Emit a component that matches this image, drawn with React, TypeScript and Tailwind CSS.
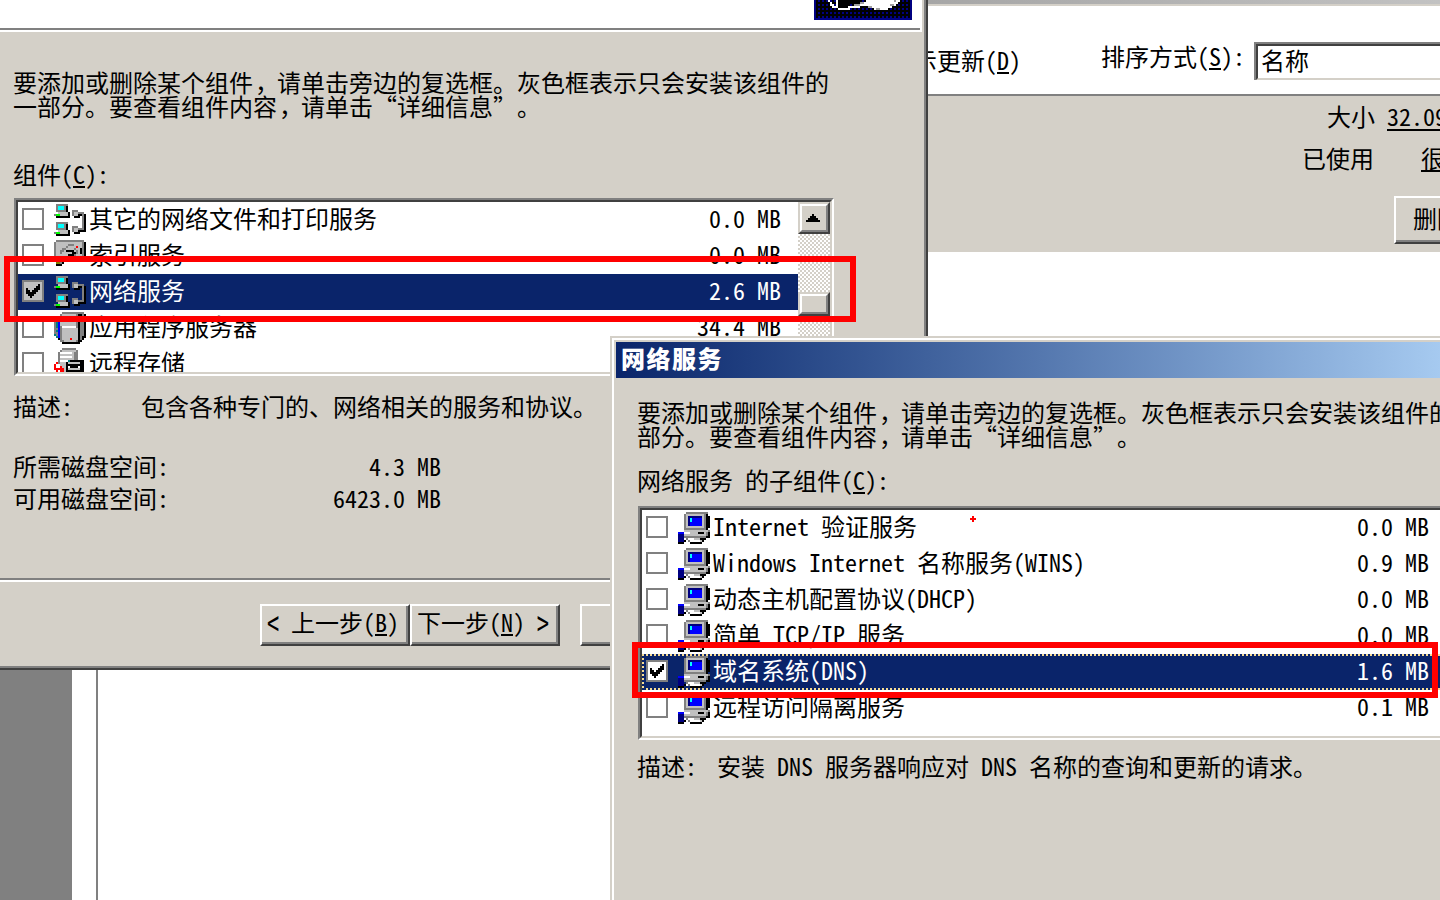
import React from "react";

const PALETTE: Record<string, string> = {
  k: "#000000",
  g: "#808080",
  l: "#c0c0c0",
  w: "#ffffff",
  n: "#000080",
  b: "#0000ff",
  c: "#00ffff",
  G: "#00ff00",
  t: "#008080",
  o: "#808000",
  r: "#ff0000",
};

const COMPUTER = [
  "....ggggggggggg.",
  "...glllllllllgk.",
  "...glnnnnnnnlgkk",
  "...glncbbbbblgkk",
  "...glncbbbbblgkk",
  "...glnbbbbbblgkk",
  "...glnbbbbbblgkk",
  "...glllllllllgkk",
  "...gggggggggggk.",
  "...llllllllllllg",
  "bbbwwwllllkkklgk",
  "nnnlllllllllllgk",
  "nnngggggggggggkk",
  "nnn.gwwwlllkkk..",
  "nnnkwgwwwwwlk...",
  "kkk...kkkkkk....",
];

const NETWORK = [
  ".gggggg.........",
  ".gcccgk.........",
  ".gcccgk.........",
  ".gggggk..ggg....",
  "..lllllk.gllggg.",
  "gGGllllk.gllkkgk",
  ".kkkkkkk..kkk.gk",
  "..............gk",
  "..............gk",
  ".gggggg.......gk",
  ".gcccgk.......gk",
  ".gcccgk..ggg..gk",
  ".gggggk..gllgggk",
  "..lllllk.gllkkkk",
  "gGGllllk..kkk...",
  ".kkkkkkk........",
];

const DRIVE = [
  ".gggggggggggggg.",
  "glllllllllllllgk",
  "gllllllgggllllgk",
  "glllllgllllrllgk",
  "glllggllllgllkgk",
  "gllgglkkkklglkgk",
  "gllglllllkkglkgk",
  "gllllllkkkglllgk",
  "gllloogggglllggk",
  "ggloogggggggggkk",
  "..oogkkkkkkkkkk.",
  ".oogk...........",
  ".kkk............",
];

const SERVER = [
  "....ggggggggggg.",
  "...glllllllgkkgk",
  "..ggggggggggkkgk",
  ".glllllllllgkggk",
  ".twwwwwwwwwgkggk",
  "gtbllllllllgkggk",
  "gtbllllllllgkggk",
  "gtbgwwwwwwwgkggk",
  "ggbgllllllllkggk",
  "gtbgllllllllkggk",
  "ggbgllllllllkggk",
  "tgbgllllllllkggk",
  ".tbgllllllllkgkk",
  "..kgllllrlllkgk.",
  "...ggllllllgkk..",
  "....kkkkkkkkk...",
];

const STORAGE = [
  "....ggggggg.....",
  "...glllllllg....",
  "..gwwwwwwlgg....",
  "..glllllllgg....",
  "..gwwwwwwlgg....",
  "..glllllllgg....",
  "..gwwwwtkkkkkkk.",
  ".rglllkllllllkk.",
  "r..lllkkkkkkkkk.",
  "r..rllkwkkkkwkk.",
  "rrrrrlkllllllkk.",
  ".r.rrlkkkkkkkkk.",
  "..r.kkkkkkkkkkk.",
];

function PixelIcon({ rows }: { rows: string[] }) {
  return (
    <svg width="32" height="32" viewBox="0 0 16 16" shapeRendering="crispEdges" className="block shrink-0">
      {rows.flatMap((row, y) =>
        [...row].map((ch, x) =>
          PALETTE[ch] ? <rect key={`${x}-${y}`} x={x} y={y} width="1" height="1" fill={PALETTE[ch]} /> : null,
        ),
      )}
    </svg>
  );
}

function Key({ children }: { children: string }) {
  return <span className="underline decoration-2 underline-offset-2 [text-decoration-skip-ink:none]">{children}</span>;
}

function Comma() {
  return <span className="inline-block w-6 pl-[2px] align-top [font-feature-settings:normal]">，</span>;
}

function Checkbox({ checked, dim }: { checked?: boolean; dim?: boolean }) {
  return (
    <span className={`flex size-[22px] shrink-0 border-2 border-[#808080] p-[2px] ${dim ? "bg-[#c0c0c0]" : "bg-white"}`}>
      {checked && (
        <svg width="14" height="18" viewBox="0 0 7 9" shapeRendering="crispEdges" className="block">
          {[2, 3, 4, 3, 2, 1, 0].map((y, x) => (
            <rect key={x} x={x} y={y} width="1" height="3" fill="#000" />
          ))}
        </svg>
      )}
    </span>
  );
}

type Item = { name: string; size: string; icon: string[]; checked?: boolean; dim?: boolean; focus?: boolean };

function ListRow({ item, padRight }: { item: Item; padRight: string }) {
  return (
    <div
      className={`relative flex h-9 shrink-0 pl-1 ${padRight} ${item.checked ? "bg-[#0a246a] text-white" : ""}`}
    >
      <div className="pt-[6px]">
        <Checkbox checked={item.checked} dim={item.dim} />
      </div>
      <div className="ml-[10px] pt-[2px]">
        <PixelIcon rows={item.icon} />
      </div>
      <span className="ml-[3px] pt-1">{item.name}</span>
      <span className="ml-auto pt-1">{item.size}</span>
      {item.focus && (
        <>
          <span className="absolute inset-x-0 top-0 h-[2px] bg-[repeating-linear-gradient(90deg,#f5db95_0_2px,#0a246a_2px_4px)]" />
          <span className="absolute inset-x-0 bottom-0 h-[2px] bg-[repeating-linear-gradient(90deg,#f5db95_0_2px,#0a246a_2px_4px)]" />
          <span className="absolute inset-y-0 left-0 w-[2px] bg-[repeating-linear-gradient(180deg,#f5db95_0_2px,#0a246a_2px_4px)]" />
        </>
      )}
    </div>
  );
}

const COMPONENTS: Item[] = [
  { name: "其它的网络文件和打印服务", size: "0.0 MB", icon: NETWORK },
  { name: "索引服务", size: "0.0 MB", icon: DRIVE },
  { name: "网络服务", size: "2.6 MB", icon: NETWORK, checked: true, dim: true },
  { name: "应用程序服务器", size: "34.4 MB", icon: SERVER },
  { name: "远程存储", size: "", icon: STORAGE },
];

const SUBCOMPONENTS: Item[] = [
  { name: "Internet 验证服务", size: "0.0 MB", icon: COMPUTER },
  { name: "Windows Internet 名称服务(WINS)", size: "0.9 MB", icon: COMPUTER },
  { name: "动态主机配置协议(DHCP)", size: "0.0 MB", icon: COMPUTER },
  { name: "简单 TCP/IP 服务", size: "0.0 MB", icon: COMPUTER },
  { name: "域名系统(DNS)", size: "1.6 MB", icon: COMPUTER, checked: true, focus: true },
  { name: "远程访问隔离服务", size: "0.1 MB", icon: COMPUTER },
];

function ScrollBar() {
  return (
    <div className="flex w-8 shrink-0 flex-col bg-[repeating-conic-gradient(#d4d0c8_0_25%,#fff_0_50%)] bg-[length:4px_4px]">
      <div className="h-8 shrink-0 border-2 border-t-[#d4d0c8] border-l-[#d4d0c8] border-r-[#404040] border-b-[#404040]">
        <div className="flex h-full justify-center border-2 border-t-white border-l-white border-r-[#808080] border-b-[#808080] bg-[#d4d0c8] pt-2 pr-[2px]">
          <svg width="14" height="8" viewBox="0 0 7 4" shapeRendering="crispEdges">
            <path d="M3 0h1v1h1v1h1v1h1v1H0V3h1V2h1V1h1z" />
          </svg>
        </div>
      </div>
      <div className="mt-[58px] h-6 shrink-0 border-2 border-t-[#d4d0c8] border-l-[#d4d0c8] border-r-[#404040] border-b-[#404040]">
        <div className="h-full border-2 border-t-white border-l-white border-r-[#808080] border-b-[#808080] bg-[#d4d0c8]" />
      </div>
    </div>
  );
}

function PushButton({ className, children }: { className: string; children?: React.ReactNode }) {
  return (
    <div
      className={`shrink-0 border-t-2 border-l-2 border-r-2 border-b-2 border-t-white border-l-white border-r-[#404040] border-b-[#404040] ${className}`}
    >
      <div className="h-full border-r-2 border-b-2 border-[#808080]">{children}</div>
    </div>
  );
}

function ProgramsWindow() {
  return (
    <section className="flex h-[336px] w-[512px] flex-col overflow-hidden">
      <div className="h-[6px] shrink-0 border-b-2 border-[#d4d0c8] bg-linear-to-r from-[#a6a6a6] to-[#c2c2c2]" />
      <div className="flex h-[90px] shrink-0 border-b-2 border-[#808080] bg-white">
        <span className="-ml-[15px] w-[188px] shrink-0 pt-[42px]">
          示更新(<Key>D</Key>)
        </span>
        <span className="w-[153px] shrink-0 pt-[38px]">
          排序方式(<Key>S</Key>):
        </span>
        <div className="mt-9 h-[38px] w-[260px] shrink-0 border-t-2 border-l-2 border-[#808080]">
          <div className="h-full border-t-2 border-b-2 border-l-2 border-t-[#404040] border-b-[#d4d0c8] border-l-[#404040] pt-[2px] pl-[3px]">
            名称
          </div>
        </div>
      </div>
      <div className="flex h-[156px] shrink-0 flex-col bg-[#d4d0c8]">
        <div className="mt-2 ml-[399px] flex">
          <span className="w-[60px] shrink-0">大小</span>
          <span className="shrink-0 underline decoration-2 underline-offset-[3px]">32.09MB</span>
        </div>
        <div className="mt-[18px] ml-[374px] flex">
          <span className="w-[119px] shrink-0">已使用</span>
          <span className="shrink-0 underline decoration-2 underline-offset-2">很少</span>
        </div>
        <PushButton className="mt-[26px] ml-[466px] h-12 w-40">
          <div className="pt-2 pl-[17px]">删除</div>
        </PushButton>
      </div>
      <div className="grow bg-white" />
    </section>
  );
}

function WizardWindow() {
  return (
    <section className="absolute top-0 left-0 flex h-[670px] w-[928px] flex-col overflow-hidden border-r-2 border-b-2 border-[#404040] bg-[#d4d0c8]">
      <div className="flex grow flex-col border-r-2 border-b-2 border-[#808080]">
        <div className="mr-[2px] h-8 shrink-0 border-b-2 border-white bg-white">
          <div className="mr-[2px] flex h-[30px] justify-end border-b-2 border-[#808080] pr-2">
            <svg width="98" height="20" viewBox="0 0 49 10" shapeRendering="crispEdges" className="block">
              <rect width="49" height="10" fill="#000080" />
              <rect x="1" width="47" height="9" fill="#000" />
              {Array.from({ length: 23 }, (_, i) =>
                [0, 2, 4, 6, 8].map((y) => (
                  <rect key={`${i}-${y}`} x={2 + i * 2} y={y} width="1" height="1" fill="#000080" />
                )),
              )}
              <path d="M12 0h12v2h-6v1h-6z" fill="#000" />
              <path
                d="M7 0h1v1h1v1h1v1h1V0h1v4h5V3h5V2h3V1h1V0h17v1h-1v1h-1v1h-2v1h-2v1h-7V4h-3V3h-4v1h-5v1h-6V4H9V3H8V1H7z"
                fill="#fff"
              />
              <path d="M20 2h3v1h-3zM23 1h2v1h-2zM27 3h2v1h-2zM31 4h2v1h-2zM38 2h2v1h-2zM40 0h1v1h-1z" fill="#a0a0a0" />
            </svg>
          </div>
        </div>
        <div className="mt-[38px] ml-[13px] shrink-0">
          要添加或删除某个组件
          <Comma />
          请单击旁边的复选框。灰色框表示只会安装该组件的
          <br />
          一部分。要查看组件内容
          <Comma />
          请单击“详细信息”。
        </div>
        <div className="mt-11 ml-[13px] shrink-0">
          组件(<Key>C</Key>):
        </div>
        <div className="mt-3 ml-[14px] h-[178px] w-[820px] shrink-0 border-2 border-t-[#808080] border-r-white border-b-white border-l-[#808080]">
          <div className="flex h-full overflow-hidden border-2 border-t-[#404040] border-r-[#d4d0c8] border-b-[#d4d0c8] border-l-[#404040] bg-white">
            <div className="flex grow flex-col overflow-hidden">
              {COMPONENTS.map((item) => (
                <ListRow key={item.name} item={item} padRight="pr-[17px]" />
              ))}
            </div>
            <ScrollBar />
          </div>
        </div>
        <div className="mt-[18px] ml-[13px] flex shrink-0">
          <span className="w-32">描述:</span>
          <span>包含各种专门的、网络相关的服务和协议。</span>
        </div>
        <div className="mt-9 ml-[13px] flex w-[428px] shrink-0 justify-between">
          <span>所需磁盘空间:</span>
          <span>4.3 MB</span>
        </div>
        <div className="mt-2 ml-[13px] flex w-[428px] shrink-0 justify-between">
          <span>可用磁盘空间:</span>
          <span>6423.0 MB</span>
        </div>
        <div className="mt-[68px] h-1 shrink-0 border-t-2 border-b-2 border-t-[#808080] border-b-white" />
        <div className="mt-[22px] ml-[260px] flex shrink-0">
          <PushButton className="h-[42px] w-[150px]">
            <div className="pt-1 pl-[5px] whitespace-pre">
              <span className="inline-block scale-y-150 align-top">&lt;</span> 上一步(<Key>B</Key>)
            </div>
          </PushButton>
          <PushButton className="h-[42px] w-[150px]">
            <div className="pt-1 pl-[5px] whitespace-pre">
              下一步(<Key>N</Key>) <span className="inline-block scale-y-150 align-top">&gt;</span>
            </div>
          </PushButton>
          <PushButton className="ml-5 h-[42px] w-[150px]" />
        </div>
      </div>
    </section>
  );
}

function NetworkServicesWindow() {
  return (
    <section className="absolute top-[336px] left-[610px] h-[564px] w-[830px] overflow-hidden border-t-2 border-l-2 border-[#d4d0c8] bg-[#d4d0c8]">
      <div className="flex h-full flex-col border-t-2 border-l-2 border-white">
        <div className="mt-[2px] ml-[2px] h-9 shrink-0 bg-linear-to-r from-[#0a246a] to-[#a6caf0] pt-1 pl-[5px] font-black tracking-[1.5px] text-white">
          网络服务
        </div>
        <div className="mt-[22px] ml-[23px] shrink-0 whitespace-nowrap">
          要添加或删除某个组件
          <Comma />
          请单击旁边的复选框。灰色框表示只会安装该组件的
          <br />
          部分。要查看组件内容
          <Comma />
          请单击“详细信息”。
        </div>
        <div className="mt-5 ml-[23px] shrink-0">
          网络服务 的子组件(<Key>C</Key>):
        </div>
        <div className="mt-[14px] ml-6 h-[234px] shrink-0 border-t-2 border-b-2 border-l-2 border-t-[#808080] border-b-white border-l-[#808080]">
          <div className="relative flex h-full flex-col overflow-hidden border-t-2 border-b-2 border-l-2 border-t-[#404040] border-b-[#d4d0c8] border-l-[#404040] bg-white">
            {SUBCOMPONENTS.map((item) => (
              <ListRow key={item.name} item={item} padRight="pr-[11px]" />
            ))}
            <svg width="6" height="6" viewBox="0 0 3 3" shapeRendering="crispEdges" className="absolute top-[6px] left-[328px]">
              <path d="M1 0h1v1h1v1H2v1H1V2H0V1h1z" fill="#f00" />
            </svg>
          </div>
        </div>
        <div className="mt-[14px] ml-[23px] flex shrink-0">
          <span className="w-20">描述:</span>
          <span>安装 DNS 服务器响应对 DNS 名称的查询和更新的请求。</span>
        </div>
      </div>
    </section>
  );
}

export default function App() {
  return (
    <main
      lang="zh-CN"
      className="relative h-[900px] w-[1440px] overflow-hidden bg-white font-['Noto_Sans_CJK_SC',sans-serif] text-2xl leading-6 whitespace-nowrap text-black [font-feature-settings:'hwid'] [text-spacing-trim:space-all]"
    >
      <div className="flex justify-end">
        <ProgramsWindow />
      </div>
      <div className="flex h-[564px]">
        <div className="w-[72px] bg-[#808080]" />
        <div className="w-[26px] border-r-2 border-[#808080]" />
      </div>
      <WizardWindow />
      <NetworkServicesWindow />
      <div className="absolute top-[256px] left-1 h-[66px] w-[852px] border-6 border-[#ff0000]" />
      <div className="absolute top-[642px] left-[632px] h-14 w-[806px] border-6 border-[#ff0000]" />
    </main>
  );
}
